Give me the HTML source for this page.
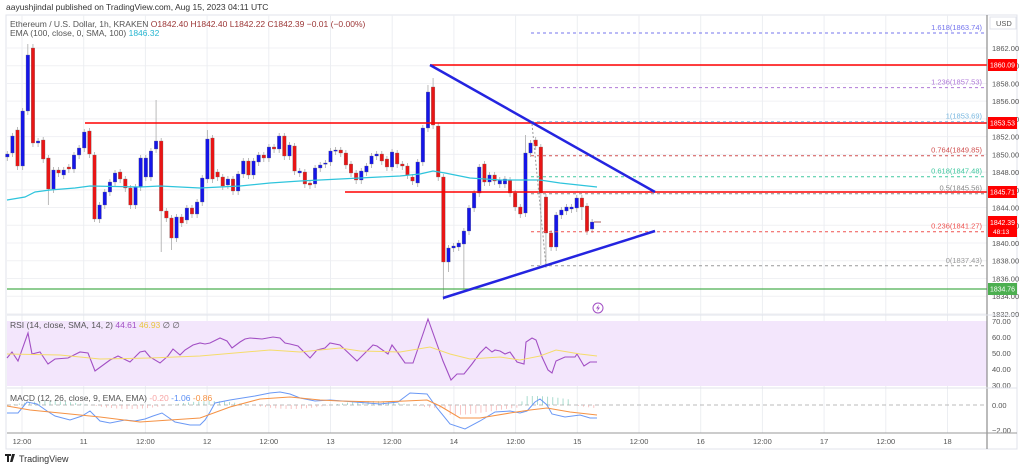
<!DOCTYPE html><html><head><meta charset="utf-8"><style>
html,body{margin:0;padding:0;background:#fff;width:1024px;height:468px;overflow:hidden;font-family:"Liberation Sans",sans-serif}
svg text{font-family:"Liberation Sans",sans-serif}
</style></head><body>
<svg id="s" width="1024" height="468" xmlns="http://www.w3.org/2000/svg">
<rect width="1024" height="468" fill="#fff"/>
<text x="6" y="10" font-size="8.5" fill="#333">aayushjindal published on TradingView.com, Aug 15, 2023 04:11 UTC</text>
<rect x="6" y="15" width="1011" height="434" fill="none" stroke="#e0e3eb"/>
<g id="grid"></g>
<rect x="7" y="321" width="980" height="65" fill="#f3e6fc"/>
<g id="g2"></g>
<line x1="987" y1="15" x2="987" y2="449" stroke="#777"/>
<line x1="7" y1="315" x2="1017" y2="315" stroke="#e0e3eb"/>
<line x1="7" y1="388" x2="1017" y2="388" stroke="#e0e3eb"/>
<line x1="7" y1="433" x2="1017" y2="433" stroke="#999"/>
<text x="10" y="27" font-size="8.5" fill="#555">Ethereum / U.S. Dollar, 1h, KRAKEN <tspan fill="#9b3535">O1842.40  H1842.40  L1842.22  C1842.39  −0.01 (−0.00%)</tspan></text>
<text x="10" y="36" font-size="8.5" fill="#555">EMA (100, close, 0, SMA, 100) <tspan fill="#26b5d0">1846.32</tspan></text>
<text x="10" y="328" font-size="8.5" fill="#555">RSI (14, close, SMA, 14, 2) <tspan fill="#a24fc4">44.61</tspan> <tspan fill="#e8c640">46.93</tspan> ∅ ∅</text>
<text x="10" y="401" font-size="8.5" fill="#555">MACD (12, 26, close, 9, EMA, EMA) <tspan fill="#f7a4a4">-0.20</tspan> <tspan fill="#5a8ef5">-1.06</tspan> <tspan fill="#f59245">-0.86</tspan></text>
<rect x="990" y="17" width="26" height="12" fill="#fff" stroke="#e0e3eb"/>
<text x="996" y="26" font-size="7.5" fill="#555">USD</text>
<circle cx="598" cy="308" r="5" fill="#fff" stroke="#a24fc4"/>
<path d="M599 304.5l-3 4h2l-1 3 3-4h-2z" fill="#a24fc4"/>
<path d="M5 454h6v2h-2v6h-2v-6h-2z M12 454h3l-2.5 8h-2.5z" fill="#222"/>
<text x="19" y="462" font-size="9" fill="#333">TradingView</text>
</svg>
<script>
const G=document.getElementById('grid'),G2=document.getElementById('g2');
const ns='http://www.w3.org/2000/svg';
function el(t,a,p,txt){const e=document.createElementNS(ns,t);for(const k in a)e.setAttribute(k,a[k]);if(txt!==undefined)e.textContent=txt;(p||G2).appendChild(e);return e}
const yp=p=>48+(1862-p)*8.864;
for(let p=1862;p>=1832;p-=2){const y=yp(p);if(y<314)el('line',{x1:7,y1:y,x2:987,y2:y,stroke:'#f0f1f4'},G);el('text',{x:992,y:y+3,'font-size':7.5,fill:'#555'},G,p.toFixed(2))}
const tl=['12:00','11','12:00','12','12:00','13','12:00','14','12:00','15','12:00','16','12:00','17','12:00','18'];
tl.forEach((t,i)=>{const x=22+i*61.7;el('line',{x1:x,y1:15,x2:x,y2:433,stroke:'#eceef2'},G);el('text',{x:x,y:444,'font-size':7.5,fill:'#555','text-anchor':'middle'},G,t)});
[[321,'70.00'],[337,'60.00'],[353,'50.00'],[369,'40.00'],[385,'30.00'],[405,'0.00'],[430,'−2.00']].forEach(([y,t])=>el('text',{x:992,y:y+3,'font-size':7.5,fill:'#555'},G,t));
[337,369].forEach(y=>el('line',{x1:7,y1:y,x2:987,y2:y,stroke:'#dcc8ec'},G));
el('line',{x1:7,y1:353,x2:987,y2:353,stroke:'#b9a6c8','stroke-dasharray':'4,3'},G);
el('line',{x1:7,y1:405,x2:987,y2:405,stroke:'#bbb','stroke-dasharray':'4,3'},G);
const C=[[154,157,1],[136,153,1],[130,166,0],[111,166,1],[55,111,1],[48,143,0],[141,143,1],[140,159,0],[158,189,0],[170,189,1],[170,173,0],[170,175,1],[167,169,0],[155,169,1],[148,155,1],[132,148,1],[131,154,0],[155,219,0],[205,219,1],[192,205,1],[182,192,1],[173,182,1],[172,179,0],[179,188,0],[188,205,0],[187,205,1],[158,187,1],[158,177,1],[151,177,1],[141,149,1],[141,211,0],[211,218,0],[218,238,0],[217,238,1],[217,223,0],[208,220,1],[208,214,0],[202,214,1],[178,202,1],[139,179,1],[138,179,0],[172,177,0],[177,186,0],[179,185,1],[179,191,0],[174,191,1],[161,174,1],[161,175,0],[161,175,1],[155,162,1],[155,158,0],[147,158,1],[147,149,0],[136,149,1],[136,156,0],[145,156,1],[146,171,0],[171,173,1],[172,184,0],[183,185,0],[168,184,1],[165,168,1],[163,164,1],[151,162,1],[150,151,1],[150,153,0],[153,165,0],[164,173,0],[173,180,0],[171,180,1],[166,172,1],[156,164,1],[154,156,1],[154,161,0],[159,167,0],[152,167,1],[153,164,0],[164,166,0],[166,175,0],[177,181,0],[162,183,1],[128,162,1],[92,128,1],[87,125,0],[126,177,0],[177,262,0],[248,262,1],[246,248,1],[243,247,1],[231,244,1],[208,231,1],[193,208,1],[167,193,1],[164,182,0],[175,182,1],[175,181,0],[180,184,1],[179,184,1],[180,193,0],[193,207,0],[207,214,0],[153,213,1],[143,153,1],[140,146,0],[147,193,0],[197,233,0],[233,247,0],[215,247,1],[210,215,1],[207,211,1],[207,209,1],[198,208,1],[198,207,0],[206,231,0],[222,229,1]];
const W={4:[44,0],5:[44,0],29:[100,0],30:[0,252],17:[0,222],32:[0,250],83:[78,0],82:[85,0],85:[0,300],89:[0,290],86:[0,272],101:[135,0],104:[0,265],105:[0,268],112:[0,220],8:[0,205],39:[130,0]};
C.forEach((c,i)=>{const x=7.3+i*5.13;const t=Math.min(c[0],c[1]),b=Math.max(c[0],c[1]);let wt=t-3,wb=b+4;if(W[i]){if(W[i][0])wt=W[i][0];if(W[i][1])wb=W[i][1]}
el('line',{x1:x,y1:wt,x2:x,y2:wb,stroke:'#aaa','stroke-width':0.8});
el('rect',{x:x-1.8,y:t,width:3.6,height:Math.max(b-t,1.2),fill:c[2]?'#1515e8':'#e81515',stroke:'#777','stroke-width':0.3})});
el('line',{x1:594,y1:222,x2:601,y2:222,stroke:'#a55','stroke-width':1});
function pl(pts,st,w,d){el('polyline',{points:pts.map(p=>p.join(',')).join(' '),fill:'none',stroke:st,'stroke-width':w||1,'stroke-dasharray':d||'none'})}
pl([[7,200],[25,197],[35,192],[50,190],[75,188],[90,186],[140,187],[160,186],[200,188],[240,186],[270,183],[300,181],[320,180],[360,178],[400,176],[420,174],[433,171],[445,173],[470,178],[500,180],[540,180],[560,183],[597,187]],'#2ec4dc',1.2);
el('line',{x1:430,y1:65,x2:987,y2:65,stroke:'#f00','stroke-width':1.5});
el('line',{x1:85,y1:123,x2:987,y2:123,stroke:'#f00','stroke-width':1.5});
el('line',{x1:345,y1:192,x2:987,y2:192,stroke:'#f00','stroke-width':1.5});
el('line',{x1:7,y1:289,x2:987,y2:289,stroke:'#4caf50','stroke-width':1.2});
[[33,'1.618(1863.74)','#7474ee'],[87.6,'1.236(1857.53)','#b07ad8'],[121.7,'1(1853.69)','#7ab8e0'],[155.7,'0.764(1849.85)','#d05050'],[176.7,'0.618(1847.48)','#40c8a0'],[193.7,'0.5(1845.56)','#888'],[231.7,'0.236(1841.27)','#ef5350'],[265.8,'0(1837.43)','#999']].forEach(([y,t,c])=>{el('line',{x1:531,y1:y,x2:987,y2:y,stroke:c,'stroke-dasharray':'3,3'});el('text',{x:982,y:y-3,'font-size':7.5,fill:c,'text-anchor':'end'},G2,t)});
el('line',{x1:532,y1:124,x2:546,y2:266,stroke:'#999','stroke-dasharray':'2,2'});
el('line',{x1:430,y1:65,x2:655,y2:192,stroke:'#2424e0','stroke-width':2.5});
el('line',{x1:443,y1:298,x2:655,y2:231,stroke:'#2424e0','stroke-width':2.5});
[[65,'1860.09','#f00'],[123,'1853.53','#f00'],[192,'1845.71','#f00'],[289,'1834.76','#4caf50']].forEach(([y,t,c])=>{el('rect',{x:988,y:y-6,width:29,height:12,fill:c});el('text',{x:990,y:y+2.5,'font-size':7,fill:'#fff',textLength:25,lengthAdjust:'spacingAndGlyphs'},G2,t)});
el('rect',{x:988,y:216,width:29,height:21,fill:'#f00'});el('text',{x:990,y:225,'font-size':7,fill:'#fff',textLength:25,lengthAdjust:'spacingAndGlyphs'},G2,'1842.39');el('text',{x:993,y:234,'font-size':6.5,fill:'#fff'},G2,'48:13');
pl([[7,358],[12,352],[18,361],[28,333],[32,354],[40,352],[48,364],[55,359],[68,358],[80,352],[88,353],[95,371],[110,360],[118,356],[130,362],[140,352],[145,351],[150,357],[160,363],[168,356],[173,349],[180,355],[185,350],[193,345],[200,343],[205,344],[210,343],[220,338],[227,341],[232,348],[240,342],[245,339],[250,338],[262,339],[273,337],[280,338],[285,343],[290,344],[298,346],[305,353],[310,358],[317,350],[325,348],[330,343],[340,345],[357,361],[373,345],[377,346],[388,354],[392,345],[398,353],[405,363],[413,363],[424,331],[428,319],[443,361],[451,380],[457,374],[464,374],[472,364],[480,353],[486,347],[492,352],[495,350],[500,351],[505,354],[510,352],[517,362],[524,364],[526,342],[532,338],[536,340],[542,357],[548,370],[552,373],[556,361],[565,357],[575,357],[577,354],[584,366],[590,362],[597,362]],'#a24fc4',1.1);
pl([[7,354],[60,355],[100,359],[150,358],[200,356],[270,350],[300,352],[340,348],[360,351],[400,352],[430,347],[450,354],[470,359],[500,357],[520,360],[540,356],[556,350],[580,354],[597,356]],'#f5dc6a',1);
for(let i=0;i<115;i++){const x=9+i*5.13;const v=Math.sin(i/5)*4+(i>85&&i<100?-6:0)+(i>100&&i<110?5:0);el('line',{x1:x,y1:405,x2:x,y2:405-v,stroke:v>0?'#7cc9b5':'#f5a5a5','stroke-width':0.8,opacity:0.8})}
pl([[7,413],[18,413],[27,402],[37,404],[47,411],[55,416],[70,420],[82,416],[90,411],[100,421],[110,423],[125,420],[135,421],[145,419],[153,416],[162,413],[175,422],[190,425],[200,425],[205,420],[210,412],[215,403],[230,400],[255,396],[270,393],[280,392],[290,394],[300,398],[315,401],[330,400],[355,402],[380,404],[398,402],[410,393],[427,394],[437,408],[450,424],[465,429],[480,421],[495,412],[510,411],[520,413],[527,411],[535,402],[540,399],[547,405],[552,414],[565,417],[580,415],[590,418],[597,418]],'#6a98f5',1);
pl([[7,406],[30,410],[60,413],[100,417],[140,422],[170,420],[200,418],[230,407],[260,399],[290,397],[320,400],[340,401],[380,402],[405,401],[427,400],[440,406],[460,418],[480,418],[510,413],[530,410],[547,408],[570,412],[597,415]],'#f59245',1.1);
</script>
</body></html>
